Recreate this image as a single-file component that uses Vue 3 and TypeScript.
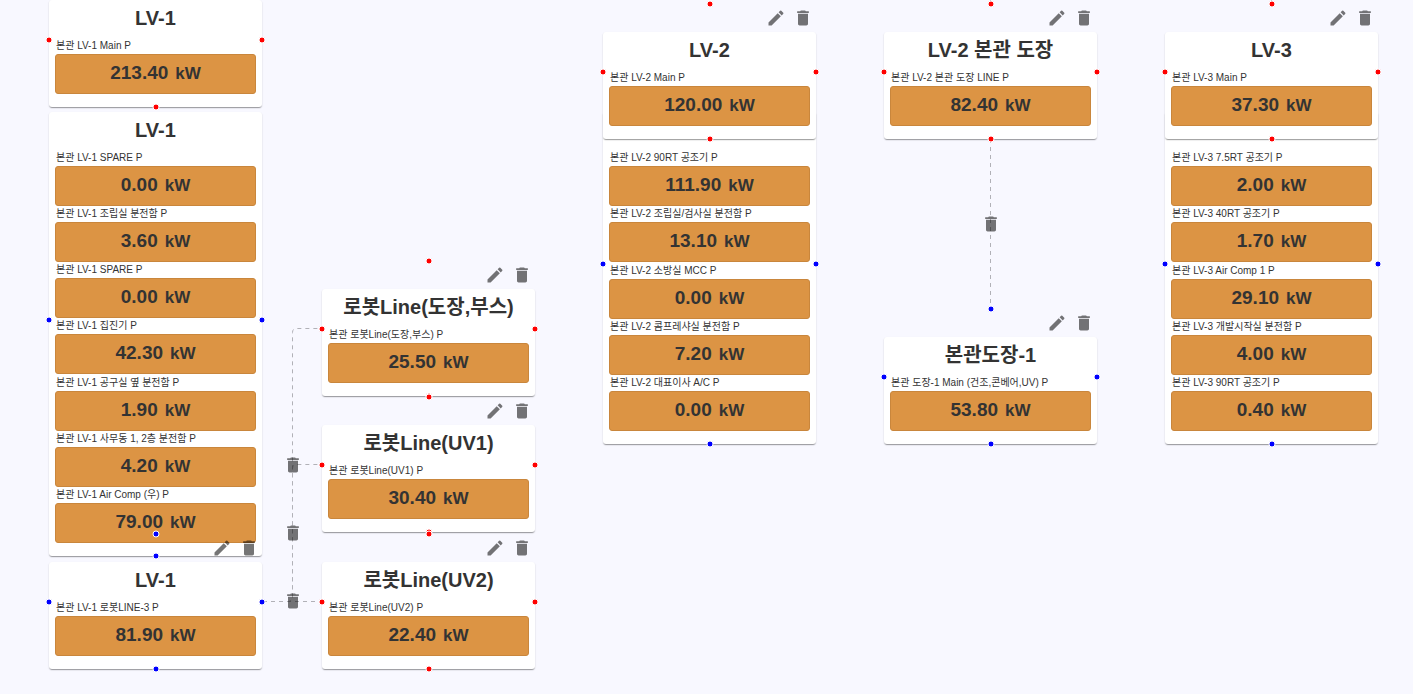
<script setup lang="ts">
interface Reading {
  label: string
  value: string
}

interface PowerNode {
  id: string
  x: number
  y: number
  height: number
  tone: 'red' | 'blue'
  title: string
  readings: Reading[]
}

interface Edge {
  id: string
  path: string
  x: number
  y: number
  removable: boolean
}

const nodes: PowerNode[] = [
  {
    id: 'lv1-loads', x: 49, y: 84, height: 472, tone: 'blue', title: 'LV-1',
    readings: [
      { label: '본관 LV-1 SPARE P', value: '0.00' },
      { label: '본관 LV-1 조립실 분전함 P', value: '3.60' },
      { label: '본관 LV-1 SPARE P', value: '0.00' },
      { label: '본관 LV-1 집진기 P', value: '42.30' },
      { label: '본관 LV-1 공구실 옆 분전함 P', value: '1.90' },
      { label: '본관 LV-1 사무동 1, 2층 분전함 P', value: '4.20' },
      { label: '본관 LV-1 Air Comp (우) P', value: '79.00' },
    ],
  },
  {
    id: 'lv2-loads', x: 603, y: 84, height: 360, tone: 'blue', title: '',
    readings: [
      { label: '본관 LV-2 90RT 공조기 P', value: '111.90' },
      { label: '본관 LV-2 조립실/검사실 분전함 P', value: '13.10' },
      { label: '본관 LV-2 소방실 MCC P', value: '0.00' },
      { label: '본관 LV-2 콤프레샤실 분전함 P', value: '7.20' },
      { label: '본관 LV-2 대표이사 A/C P', value: '0.00' },
    ],
  },
  {
    id: 'lv3-loads', x: 1165, y: 84, height: 360, tone: 'blue', title: '',
    readings: [
      { label: '본관 LV-3 7.5RT 공조기 P', value: '2.00' },
      { label: '본관 LV-3 40RT 공조기 P', value: '1.70' },
      { label: '본관 LV-3 Air Comp 1 P', value: '29.10' },
      { label: '본관 LV-3 개발시작실 분전함 P', value: '4.00' },
      { label: '본관 LV-3 90RT 공조기 P', value: '0.40' },
    ],
  },
  {
    id: 'lv1-main', x: 49, y: -28, height: 135, tone: 'red', title: 'LV-1',
    readings: [{ label: '본관 LV-1 Main P', value: '213.40' }],
  },
  {
    id: 'lv1-robot', x: 49, y: 534, height: 135, tone: 'blue', title: 'LV-1',
    readings: [{ label: '본관 LV-1 로봇LINE-3 P', value: '81.90' }],
  },
  {
    id: 'robot-booth', x: 322, y: 261, height: 135, tone: 'red', title: '로봇Line(도장,부스)',
    readings: [{ label: '본관 로봇Line(도장,부스) P', value: '25.50' }],
  },
  {
    id: 'robot-uv1', x: 322, y: 397, height: 135, tone: 'red', title: '로봇Line(UV1)',
    readings: [{ label: '본관 로봇Line(UV1) P', value: '30.40' }],
  },
  {
    id: 'robot-uv2', x: 322, y: 534, height: 135, tone: 'red', title: '로봇Line(UV2)',
    readings: [{ label: '본관 로봇Line(UV2) P', value: '22.40' }],
  },
  {
    id: 'lv2-main', x: 603, y: 4, height: 135, tone: 'red', title: 'LV-2',
    readings: [{ label: '본관 LV-2 Main P', value: '120.00' }],
  },
  {
    id: 'lv2-paint', x: 884, y: 4, height: 135, tone: 'red', title: 'LV-2 본관 도장',
    readings: [{ label: '본관 LV-2 본관 도장 LINE P', value: '82.40' }],
  },
  {
    id: 'paint-1', x: 884, y: 309, height: 135, tone: 'blue', title: '본관도장-1',
    readings: [{ label: '본관 도장-1 Main (건조,콘베어,UV) P', value: '53.80' }],
  },
  {
    id: 'lv3-main', x: 1165, y: 4, height: 135, tone: 'red', title: 'LV-3',
    readings: [{ label: '본관 LV-3 Main P', value: '37.30' }],
  },
]

const edges: Edge[] = [
  { id: 'to-booth', path: 'M263 601.5H288.5Q292.5 601.5 292.5 597.5V332.5Q292.5 328.5 296.5 328.5H322', x: 293, y: 465, removable: true },
  { id: 'to-uv1', path: 'M263 601.5H288.5Q292.5 601.5 292.5 597.5V468.5Q292.5 464.5 296.5 464.5H322', x: 293, y: 533, removable: true },
  { id: 'to-uv2', path: 'M263 601.5H322', x: 293, y: 601, removable: true },
  { id: 'to-paint', path: 'M990.5 139V309', x: 991, y: 224, removable: true },
  { id: 'from-paint', path: 'M990.5 4V-60', x: 991, y: -28, removable: false },
  { id: 'from-lv3', path: 'M1271.5 4V-60', x: 1272, y: -28, removable: false },
]

const sides = ['top', 'right', 'bottom', 'left'] as const

const editPath =
  'M3 17.25V21h3.75L17.81 9.94l-3.75-3.75L3 17.25zM20.71 7.04c.39-.39.39-1.02 0-1.41l-2.34-2.34a.9959.9959 0 0 0-1.41 0l-1.83 1.83 3.75 3.75 1.83-1.83z'
const deletePath = 'M6 19c0 1.1.9 2 2 2h8c1.1 0 2-.9 2-2V7H6v12zM19 4h-3.5l-1-1h-5l-1 1H5v2h14V4z'
</script>

<template>
  <main class="canvas">
    <svg class="edges" aria-hidden="true">
      <path v-for="edge in edges" :key="edge.id" :d="edge.path" />
    </svg>

    <template v-for="edge in edges" :key="edge.id">
      <button
        v-if="edge.removable"
        type="button"
        class="icon-button edge-button"
        aria-label="연결 삭제"
        :style="{ left: edge.x + 'px', top: edge.y + 'px' }"
      >
        <svg viewBox="0 0 24 24"><path :d="deletePath" /></svg>
      </button>
    </template>

    <article
      v-for="node in nodes"
      :key="node.id"
      class="node"
      :class="node.tone"
      :style="{ left: node.x + 'px', top: node.y + 'px', height: node.height + 'px' }"
    >
      <div class="toolbar">
        <button type="button" class="icon-button" aria-label="편집">
          <svg viewBox="0 0 24 24"><path :d="editPath" /></svg>
        </button>
        <button type="button" class="icon-button" aria-label="삭제">
          <svg viewBox="0 0 24 24"><path :d="deletePath" /></svg>
        </button>
      </div>
      <section class="card">
        <h2 class="title">{{ node.title }}</h2>
        <ul class="readings">
          <li v-for="(reading, i) in node.readings" :key="i">
            <div class="label">{{ reading.label }}</div>
            <div class="meter">
              <span class="value">{{ reading.value }}</span>
              <span class="unit">kW</span>
            </div>
          </li>
        </ul>
      </section>
      <span v-for="side in sides" :key="side" class="handle" :class="side"></span>
    </article>
  </main>
</template>

<style>
body {
  margin: 0;
  background: #f8f8ff;
}
</style>

<style scoped>
.canvas {
  position: relative;
  width: 100%;
  height: 100vh;
  overflow: hidden;
  background: #f8f8ff;
  color: #333;
  font-family: "Liberation Sans", "Noto Sans CJK KR", sans-serif;
}

.edges {
  position: absolute;
  inset: 0;
  width: 100%;
  height: 100%;
}

.edges path {
  fill: none;
  stroke: #b1b1b7;
  stroke-width: 1;
  stroke-dasharray: 4 4;
}

.node {
  position: absolute;
  display: flex;
  flex-direction: column;
  width: 213px;
}

.toolbar {
  display: flex;
  flex: none;
  justify-content: flex-end;
  align-items: center;
  gap: 7px;
  height: 28px;
  padding-right: 3px;
}

.icon-button {
  display: block;
  width: 20px;
  height: 20px;
  padding: 0;
  border: 0;
  background: none;
  cursor: pointer;
}

.icon-button svg {
  display: block;
  width: 100%;
  height: 100%;
  fill: rgba(0, 0, 0, 0.54);
}

.edge-button {
  position: absolute;
  transform: translate(-50%, -50%);
}

.card {
  display: flex;
  flex: 1;
  flex-direction: column;
  box-sizing: border-box;
  padding: 0 6px 13px;
  border-radius: 3px;
  background: #fff;
  box-shadow: 0 2px 1px -1px rgba(0, 0, 0, 0.2), 0 1px 1px rgba(0, 0, 0, 0.14), 0 1px 2px rgba(0, 0, 0, 0.12);
}

.title {
  flex: none;
  height: 38px;
  margin: 0;
  font-size: 20px;
  line-height: 36px;
  font-weight: 700;
  text-align: center;
  white-space: nowrap;
}

.readings {
  display: flex;
  flex: 1;
  flex-direction: column;
  justify-content: space-between;
  margin: 0;
  padding: 0;
  list-style: none;
}

.label {
  height: 16px;
  padding-left: 1px;
  font-size: 10px;
  line-height: 15px;
  white-space: nowrap;
}

.meter {
  display: flex;
  justify-content: center;
  align-items: baseline;
  gap: 7px;
  box-sizing: border-box;
  height: 40px;
  border: 1px solid #c9863c;
  border-radius: 3px;
  background: #dc9444;
  font-weight: 700;
  line-height: 36px;
}

.value {
  font-size: 19px;
}

.unit {
  font-size: 17px;
}

.handle {
  position: absolute;
  box-sizing: border-box;
  width: 7px;
  height: 7px;
  border: 1px solid #fff;
  border-radius: 50%;
  transform: translate(-50%, -50%);
}

.red .handle {
  background: #f00;
}

.blue .handle {
  background: #00f;
}

.handle.top {
  top: 0;
  left: 50%;
}

.handle.right {
  top: 50%;
  left: 100%;
}

.handle.bottom {
  top: 100%;
  left: 50%;
}

.handle.left {
  top: 50%;
  left: 0;
}
</style>
